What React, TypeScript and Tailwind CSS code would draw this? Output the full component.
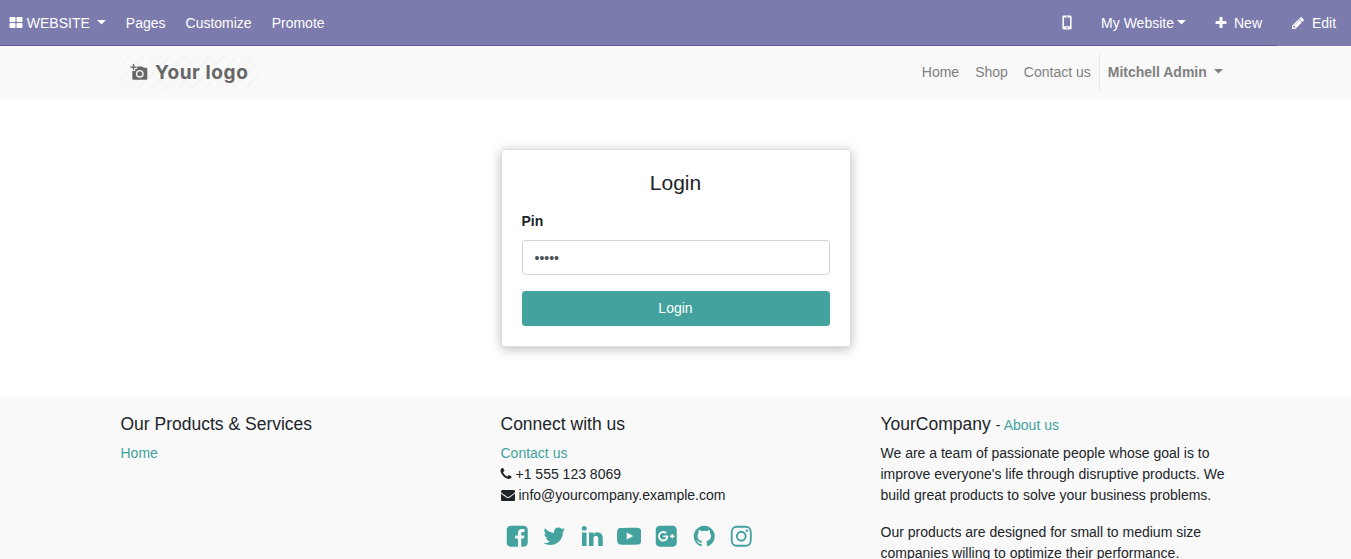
import React from "react";

const icons = {
  thLarge:
    "M832 1024v384q0 52-38 90t-90 38h-512q-52 0-90-38t-38-90v-384q0-52 38-90t90-38h512q52 0 90 38t38 90zm0-768v384q0 52-38 90t-90 38h-512q-52 0-90-38t-38-90v-384q0-52 38-90t90-38h512q52 0 90 38t38 90zm896 768v384q0 52-38 90t-90 38h-512q-52 0-90-38t-38-90v-384q0-52 38-90t90-38h512q52 0 90 38t38 90zm0-768v384q0 52-38 90t-90 38h-512q-52 0-90-38t-38-90v-384q0-52 38-90t90-38h512q52 0 90 38t38 90z",
  plus: "M1600 736v192q0 40-28 68t-68 28h-416v416q0 40-28 68t-68 28h-192q-40 0-68-28t-28-68v-416h-416q-40 0-68-28t-28-68v-192q0-40 28-68t68-28h416v-416q0-40 28-68t68-28h192q40 0 68 28t28 68v416h416q40 0 68 28t28 68z",
  pencil:
    "M491 1536l91-91-235-235-91 91v107h128v128h107zm523-928q0-22-22-22-10 0-17 7l-542 542q-7 7-7 17 0 22 22 22 10 0 17-7l542-542q7-7 7-17zm-54-192l416 416-832 832h-416v-416zm683 96q0 53-37 90l-166 166-416-416 166-165q36-38 90-38 53 0 91 38l235 234q37 39 37 91z",
  phone:
    "M1600 1240q0 27-10 70.5t-21 68.5q-21 50-122 106-94 51-186 51-27 0-52.5-3.5t-57.5-12.5-47.5-14.5-55.5-20.5-49-18q-98-35-175-83-128-79-264.5-215.5t-215.5-264.5q-48-77-83-175-3-9-18-49t-20.5-55.5-14.5-47.5-12.5-57.5-3.5-52.5q0-92 51-186 56-101 106-122 25-11 68.5-21t70.5-10q14 0 21 3 18 6 53 76 11 19 30 54t35 63.5 31 53.5q3 4 17.5 25t21.5 35.5 7 28.5q0 20-28.5 50t-62 55-62 53-28.5 46q0 9 5 22.5t8.5 20.5 14 24 11.5 19q76 137 174 235t235 174q2 1 19 11.5t24 14 20.5 8.5 22.5 5q18 0 46-28.5t53-62 55-62 50-28.5q14 0 28.5 7t35.5 21.5 25 17.5q25 15 53.5 31t63.5 35 54 30q70 35 76 53 3 7 3 21z",
  envelope:
    "M1792 710v794q0 66-47 113t-113 47h-1472q-66 0-113-47t-47-113v-794q44 49 101 87 362 246 497 345 57 42 92.5 65.5t94.5 48 110 24.5h2q51 0 110-24.5t94.5-48 92.5-65.5q170-123 498-345 57-39 100-87zm0-294q0 79-49 151t-122 123q-376 261-468 325-10 7-42.5 30.5t-54 38-52 32.5-57.5 27-50 9h-2q-23 0-50-9t-57.5-27-52-32.5-54-38-42.5-30.5q-91-64-262-182.5t-205-142.5q-62-42-117-115.5t-55-136.5q0-78 41.5-130t118.5-52h1472q65 0 112.5 47t47.5 113z",
  facebook:
    "M1376 128q119 0 203.5 84.5t84.5 203.5v960q0 119-84.5 203.5t-203.5 84.5h-188v-595h199l30-232h-229v-148q0-56 23.5-84t91.5-28l122-1v-207q-63-9-178-9-136 0-217.5 80t-81.5 226v171h-200v232h200v595h-532q-119 0-203.5-84.5t-84.5-203.5v-960q0-119 84.5-203.5t203.5-84.5h960z",
  twitter:
    "M1684 408q-67 98-162 167 1 14 1 42 0 130-38 259.5t-115.5 248.5-184.5 210.5-258 146-323 54.5q-271 0-496-145 35 4 78 4 225 0 401-138-105-2-188-64.5t-114-159.5q33 5 61 5 43 0 85-11-112-23-185.5-111.5t-73.5-205.5v-4q68 38 146 41-66-44-105-115t-39-154q0-88 44-163 121 149 294.5 238.5t371.5 99.5q-8-38-8-74 0-134 94.5-228.5t228.5-94.5q140 0 236 102 109-21 205-78-37 115-142 178 93-10 186-50z",
  linkedin:
    "M477 625v991h-330v-991h330zm21-306q1 73-50.5 122t-135.5 49h-2q-82 0-132-49t-50-122q0-74 51.5-122.5t134.5-48.5 133 48.5 51 122.5zm1166 729v568h-329v-530q0-105-40.5-164.5t-126.5-59.5q-63 0-105.5 34.5t-63.5 85.5q-11 30-11 81v553h-329q2-399 2-647t-1-296l-1-48h329v144h-2q20-32 41-56t56.5-52 87-43.5 114.5-15.5q171 0 275 113.5t104 332.5z",
  youtube:
    "M711 1128l484-250-484-253v503zm185-862q168 0 324.5 4.5t229.5 9.5l73 4q1 0 17 1.5t23 3 23.5 4.5 28.5 8 28 13 31 19.5 29 26.5q6 6 15.5 18.5t29 58.5 26.5 101q8 64 12.5 136.5t5.5 113.5v176q1 145-18 290-7 55-25 99.5t-32 61.5l-14 17q-14 15-29 26.5t-31 19-28 12.5-28.5 8-24 4.5-23 3-16.5 1.5q-251 19-627 19-207-2-359.5-6.5t-200.5-7.5l-49-4-36-4q-36-5-54.5-10t-51-21-56.5-41q-6-6-15.5-18.5t-29-58.5-26.5-101q-8-64-12.5-136.5t-5.5-113.5v-176q-1-145 18-290 7-55 25-99.5t32-61.5l14-17q14-15 29-26.5t31-19.5 28-13 28.5-8 23.5-4.5 23-3 17-1.5q251-18 627-18z",
  googlePlus:
    "M1045 905q0-26-6-64h-362v132h217q-3 24-16.5 50t-37.5 53-66.5 44.5-96.5 17.5q-99 0-169-71t-70-171 70-171 169-71q92 0 153 59l104-101q-108-100-257-100-160 0-272 112.5t-112 271.5 112 271.5 272 112.5q165 0 266.5-105t101.5-270zm345 46h109v-110h-109v-110h-110v110h-110v110h110v110h110v-110zm274-535v960q0 119-84.5 203.5t-203.5 84.5h-960q-119 0-203.5-84.5t-84.5-203.5v-960q0-119 84.5-203.5t203.5-84.5h960q119 0 203.5 84.5t84.5 203.5z",
  github:
    "M896 128q209 0 385.5 103t279.5 279.5 103 385.5q0 251-146.5 451.5t-378.5 277.5q-27 5-40-7t-13-30q0-3 .5-76.5t.5-134.5q0-97-52-142 57-6 102.5-18t94-39 81-66.5 53-105 20.5-150.5q0-119-79-206 37-91-8-204-28-9-81 11t-92 44l-38 24q-93-26-192-26t-192 26q-16-11-42.5-27t-83.5-38.5-85-13.5q-45 113-8 204-79 87-79 206 0 85 20.5 150t52.5 105 80.5 67 94 39 102.5 18q-39 36-49 103-21 10-45 15t-57 5-65.5-21.5-55.5-62.5q-19-32-48.5-52t-49.5-24l-20-3q-21 0-29 4.5t-5 11.5 9 14 13 12l7 5q22 10 43.5 38t31.5 51l10 23q13 38 44 61.5t67 30 69.5 7 55.5-3.5l23-4q0 38 .5 88.5t.5 54.5q0 18-13 30t-40 7q-232-77-378.5-277.5t-146.5-451.5q0-209 103-385.5t279.5-279.5 385.5-103z",
  instagram:
    "M1152 896q0-106-75-181t-181-75-181 75-75 181 75 181 181 75 181-75 75-181zm138 0q0 164-115 279t-279 115-279-115-115-279 115-279 279-115 279 115 115 279zm108-410q0 38-27 65t-65 27-65-27-27-65 27-65 65-27 65 27 27 65zm-502-220q-7 0-76.5-.5t-105.5 0-96.5 3-103 10-71.5 18.5q-50 20-88 58t-58 88q-11 29-18.5 71.5t-10 103-3 96.5 0 105.5.5 76.5-.5 76.5 0 105.5 3 96.5 10 103 18.5 71.5q20 50 58 88t88 58q29 11 71.5 18.5t103 10 96.5 3 105.5 0 76.5-.5 76.5.5 105.5 0 96.5-3 103-10 71.5-18.5q50-20 88-58t58-88q11-29 18.5-71.5t10-103 3-96.5 0-105.5-.5-76.5.5-76.5 0-105.5-3-96.5-10-103-18.5-71.5q-20-50-58-88t-88-58q-29-11-71.5-18.5t-103-10-96.5-3-105.5 0-76.5.5zm768 630q0 229-5 317-10 208-124 322t-322 124q-88 5-317 5t-317-5q-208-10-322-124t-124-322q-5-88-5-317t5-317q10-208 124-322t322-124q88-5 317-5t317 5q208 10 322 124t124 322q5 88 5 317z",
};

type IconName = keyof typeof icons;

function Icon({ name, className = "size-3.5" }: { name: IconName; className?: string }) {
  return (
    <svg viewBox="0 0 1792 1792" fill="currentColor" className={`shrink-0 ${className}`} aria-hidden="true">
      <path d={icons[name]} />
    </svg>
  );
}

function MobileIcon({ className = "" }: { className?: string }) {
  return (
    <svg viewBox="0 0 10 15" fill="currentColor" className={`h-[15px] w-[10px] shrink-0 ${className}`} aria-hidden="true">
      <path
        fillRule="evenodd"
        d="M1.8.4h6.4a1.4 1.4 0 0 1 1.4 1.4v11.2a1.4 1.4 0 0 1-1.4 1.4H1.8A1.4 1.4 0 0 1 .4 13V1.8A1.4 1.4 0 0 1 1.8.4zM1.9 2.6v8.6h6.2V2.6zM4 1.3v.5h2v-.5zM5 12a.8.8 0 1 0 0 1.6.8.8 0 0 0 0-1.6z"
      />
    </svg>
  );
}

function Caret({ className = "" }: { className?: string }) {
  return (
    <svg viewBox="0 0 9 4.5" fill="currentColor" className={`h-[4.5px] w-[9px] shrink-0 ${className}`} aria-hidden="true">
      <path d="M0 0h9L4.5 4.5z" />
    </svg>
  );
}

function EditorBar() {
  return (
    <nav className="flex h-[46px] shrink-0 justify-between bg-[#7c7bad] text-white">
      <div className="flex flex-1 justify-between border-b border-[#5f5e97] pt-px">
        <div className="flex items-center gap-5 pl-[9.3px]">
          <a className="flex items-center">
            <Icon name="thLarge" />
            <span className="ml-[3.5px]">WEBSITE</span>
            <Caret className="-mt-px ml-[7px]" />
          </a>
          <a>Pages</a>
          <a>Customize</a>
          <a>Promote</a>
        </div>
        <div className="flex items-center">
          <MobileIcon className="-mt-px mr-[29px]" />
          <a className="flex items-center">
            My Website
            <Caret className="-mt-px ml-[3px]" />
          </a>
          <a className="ml-7 flex items-center pr-[15px]">
            <Icon name="plus" className="-mt-px size-3.5" />
            <span className="ml-1.5">New</span>
          </a>
        </div>
      </div>
      <a className="flex w-[74px] items-center pl-3.5">
        <Icon name="pencil" className="-mt-px size-3.5" />
        <span className="ml-[7px]">Edit</span>
      </a>
    </nav>
  );
}

function Logo() {
  return (
    <div className="flex h-[37px] w-[138px] items-center bg-[repeating-linear-gradient(135deg,#f9f9f9_0px,#f9f9f9_6px,#f5f5f5_7px,#f5f5f5_8.5px,#f9f9f9_9.5px)] pl-[9.5px] text-[#666]">
      <svg viewBox="0 0 18 18" className="size-[18px] shrink-0" fill="currentColor" aria-hidden="true">
        <path d="M2.8 0h1.4v2.5h2.3v1.3H4.2v2.3H2.8V3.8H.3V2.5h2.5z" />
        <path
          fillRule="evenodd"
          d="M7.2 2.5h5l1.3 1.2H16a1.3 1.3 0 0 1 1.3 1.3v9.5A1.3 1.3 0 0 1 16 15.8H3.6a1.3 1.3 0 0 1-1.3-1.3V7h3V4.7h1.9zM9.8 5.9a3.9 3.9 0 1 0 0 7.8 3.9 3.9 0 0 0 0-7.8zm0 1.4a2.5 2.5 0 1 1 0 5 2.5 2.5 0 0 1 0-5z"
        />
      </svg>
      <span className="ml-[7px] font-[Inter,sans-serif] text-[19px] leading-none font-bold tracking-[0.6px] whitespace-nowrap">
        Your logo
      </span>
    </div>
  );
}

function SiteHeader() {
  return (
    <header className="h-[53px] shrink-0 bg-[#f9f9f9] text-[#808080]">
      <div className="mx-auto flex h-full w-[1110px] items-center justify-between">
        <Logo />
        <div className="flex h-[37px] items-center">
          <a className="px-2">Home</a>
          <a className="px-2">Shop</a>
          <a className="px-2">Contact us</a>
          <a className="flex h-full items-center border-l border-[#e9e9e9] pr-[7.7px] pl-2 font-bold">
            Mitchell Admin
            <Caret className="-mt-0.5 ml-[7px]" />
          </a>
        </div>
      </div>
    </header>
  );
}

function LoginCard() {
  return (
    <form className="w-[350px] rounded-[3px] border border-[#dfdfdf] bg-white px-5 pt-5 pb-5 shadow-[0_2px_12px_rgba(0,0,0,0.27)]">
      <h3 className="text-center text-[21px] leading-[25px]">Login</h3>
      <label htmlFor="pin" className="mt-4 block font-bold">
        Pin
      </label>
      <input
        id="pin"
        type="password"
        defaultValue="12345"
        className="mt-2 block h-[35px] w-full rounded-[3.5px] border border-[#ced4da] px-3 text-[#495057]"
      />
      <button type="button" className="mt-4 block h-[35px] w-full rounded-[3.5px] bg-[#43a29e] text-white">
        Login
      </button>
    </form>
  );
}

function Footer() {
  const social: IconName[] = ["facebook", "twitter", "linkedin", "youtube", "googlePlus", "github", "instagram"];
  return (
    <footer className="min-h-0 flex-1 bg-[#f9f9f9] pt-4">
      <div className="mx-auto grid w-[1110px] grid-cols-3 gap-[30px]">
        <section>
          <h4 className="mb-[7px] text-[17.5px] leading-[23px]">Our Products &amp; Services</h4>
          <a className="text-[#43a29e]">Home</a>
        </section>
        <section>
          <h4 className="mb-[7px] text-[17.5px] leading-[23px]">Connect with us</h4>
          <a className="block text-[#43a29e]">Contact us</a>
          <div className="flex items-center">
            <Icon name="phone" className="-mt-px -ml-[1.5px] size-3.5" />
            <span className="ml-[2.5px]">+1 555 123 8069</span>
          </div>
          <div className="flex items-center">
            <Icon name="envelope" className="-mt-px size-3.5" />
            <span className="ml-1">info@yourcompany.example.com</span>
          </div>
          <div className="mt-[18px] ml-[4.3px] flex gap-[12.9px] text-[#43a29e]">
            {social.map((name) => (
              <Icon key={name} name={name} className="size-[24.5px]" />
            ))}
          </div>
        </section>
        <section>
          <h4 className="mb-[7px] text-[17.5px] leading-[23px]">
            YourCompany <span className="text-sm">- </span>
            <a className="-ml-[0.5px] text-sm text-[#43a29e]">About us</a>
          </h4>
          <p className="mb-4">
            We are a team of passionate people whose goal is to improve everyone's life through disruptive products.
            We build great products to solve your business problems.
          </p>
          <p>Our products are designed for small to medium size companies willing to optimize their performance.</p>
        </section>
      </div>
    </footer>
  );
}

export default function App() {
  return (
    <div className="flex h-screen flex-col overflow-hidden bg-white font-['Liberation_Sans',Arial,sans-serif] text-sm leading-[21px] text-[#212529]">
      <EditorBar />
      <SiteHeader />
      <main className="flex h-[298px] shrink-0 justify-center pt-[50px]">
        <div>
          <LoginCard />
        </div>
      </main>
      <Footer />
    </div>
  );
}
